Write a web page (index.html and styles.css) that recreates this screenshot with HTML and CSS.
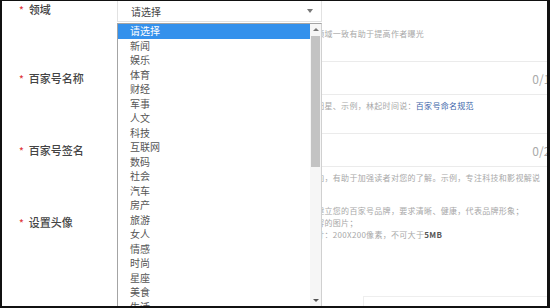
FILE: index.html
```html
<!DOCTYPE html>
<html lang="zh-CN">
<head>
  <meta charset="UTF-8">
  <title>百家号设置</title>
  <link rel="stylesheet" href="styles.css">
</head>
<body>
  <div class="frame">
    <div class="form">

      <!-- 领域 -->
      <div class="row">
        <div class="label label-select"><span class="req">*</span>领域</div>
        <div class="field">
          <div class="select">
            <span>请选择</span>
            <span class="caret"></span>
          </div>
          <p class="help">请选择您的百家号所属的领域，与您日常所发布内容的领域一致有助于提高作者曝光</p>
        </div>
      </div>

      <!-- 名称 -->
      <div class="row row-gap">
        <div class="label"><span class="req">*</span>百家号名称</div>
        <div class="field">
          <div class="input"><span class="count">0/15</span></div>
          <p class="help">名称需与内容方向相关，不超过十五个字，参考如：太阳星、示例，林起时间说：<a class="link">百家号命名规范</a></p>
        </div>
      </div>

      <!-- 签名 -->
      <div class="row row-gap">
        <div class="label"><span class="req">*</span>百家号签名</div>
        <div class="field">
          <div class="input"><span class="count">0/20</span></div>
          <p class="help">请用简洁的一句话介绍您的百家号定位与主要内容和方向，有助于加强读者对您的了解。示例，专注科技和影视解说</p>
        </div>
      </div>

      <!-- 头像 -->
      <div class="row row-gap">
        <div class="label label-avatar"><span class="req">*</span>设置头像</div>
        <div class="field">
          <p class="help">头像是展示给读者的第一印象，请上传能体现个性并助建立您的百家号品牌，要求清晰、健康，代表品牌形象；<br>请勿使用二维码、水印、联系方式、广告或其他违规内容的图片；<br>支持常见图片格式上传，为保证显示效果，建议图片尺寸：200X200像素，不可大于<b>5MB</b></p>
          <div class="upload"></div>
        </div>
      </div>

    </div>

    <!-- 展开的下拉列表 -->
    <div class="dropdown">
      <ul class="options">
        <li class="active">请选择</li>
        <li>新闻</li>
        <li>娱乐</li>
        <li>体育</li>
        <li>财经</li>
        <li>军事</li>
        <li>人文</li>
        <li>科技</li>
        <li>互联网</li>
        <li>数码</li>
        <li>社会</li>
        <li>汽车</li>
        <li>房产</li>
        <li>旅游</li>
        <li>女人</li>
        <li>情感</li>
        <li>时尚</li>
        <li>星座</li>
        <li>美食</li>
        <li>生活</li>
      </ul>
      <div class="scrollbar">
        <span class="arrow up"></span>
        <span class="thumb"></span>
        <span class="track"></span>
        <span class="arrow down"></span>
      </div>
    </div>
  </div>
</body>
</html>
```

FILE: styles.css
```css
body { margin: 0; font-family: "Noto Sans CJK SC", "Noto Sans", sans-serif; color: #333; }

.frame {
  position: relative;
  width: 550px;
  height: 308px;
  box-sizing: border-box;
  border-style: solid;
  border-color: #111;
  border-width: 1px 3px 2px 2px;
  background: #fff;
  overflow: hidden;
}

.row { display: flex; align-items: flex-start; }
.row-gap { margin-top: 21px; }

.label {
  flex: none;
  width: 115px;
  box-sizing: border-box;
  padding-left: 17px;
  height: 34px;
  line-height: 34px;
  font-size: 11px;
  font-weight: 500;
  color: #444;
  white-space: nowrap;
}
.label-select { height: 16px; line-height: 16px; }
.label-avatar { margin-top: 11px; height: 12px; line-height: 12px; }
.req { color: #e0393e; font-size: 10px; margin-right: 5px; }

.field { flex: none; width: 457px; }

.select {
  display: flex;
  justify-content: space-between;
  align-items: center;
  width: 205px;
  height: 21px;
  box-sizing: border-box;
  padding: 0 8px 0 13px;
  border: 1px solid #e2e2e2;
  border-top: none;
  font-size: 10px;
  color: #444;
}
.caret {
  width: 0;
  height: 0;
  border-left: 3px solid transparent;
  border-right: 3px solid transparent;
  border-top: 4px solid #777;
}

.input {
  display: flex;
  justify-content: flex-end;
  align-items: center;
  height: 34px;
  box-sizing: border-box;
  padding-right: 16px;
  border: 1px solid #ebebeb;
}
.count { font-size: 12px; color: #aaa; }

.help {
  margin: 6px 0 0;
  font-size: 8px;
  letter-spacing: 0.3px;
  line-height: 12px;
  color: #a8a8a8;
  white-space: nowrap;
}
.row-gap .help { margin-top: 5px; }
.label-avatar + .field .help { margin-top: 0; }
.link { color: #3a63a8; }
.help b { color: #555; }

.upload {
  margin: 55px 0 0 246px;
  height: 30px;
  border: 1px solid #eee;
}

/* dropdown overlay */
.dropdown {
  position: absolute;
  left: 115px;
  top: 22px;
  width: 205px;
  height: 284px;
  box-sizing: border-box;
  display: flex;
  border: 1px solid #a4a4a4;
  border-right-color: #d0d0d0;
  background: #fff;
}
.options {
  flex: 1;
  margin: 0;
  padding: 0;
  list-style: none;
  overflow: hidden;
}
.options li {
  height: 14.5px;
  line-height: 14.5px;
  padding-left: 12px;
  font-size: 10px;
  color: #555;
}
.options li.active { background: #3491ec; color: #fff; }

.scrollbar {
  flex: none;
  width: 11px;
  display: flex;
  flex-direction: column;
  align-items: center;
  background: #f6f6f6;
}
.arrow {
  flex: none;
  width: 0;
  height: 0;
  margin: 4px 0;
  border-left: 3px solid transparent;
  border-right: 3px solid transparent;
}
.arrow.up { border-bottom: 3px solid #777; }
.arrow.down { border-top: 3px solid #555; }
.thumb {
  flex: none;
  width: 9px;
  height: 131px;
  margin-top: 1px;
  background: #c3c3c3;
}
.track { flex: 1; }
```
